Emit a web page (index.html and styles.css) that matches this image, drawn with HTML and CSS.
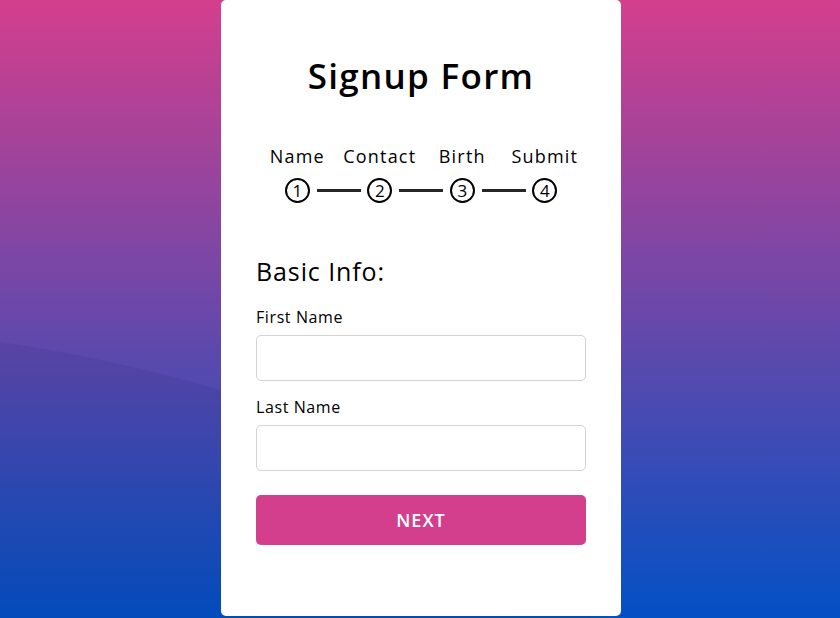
FILE: index.html
```html
<!DOCTYPE html>
<html lang="en">
<head>
<meta charset="utf-8">
<title>Signup Form</title>
<link rel="stylesheet" href="styles.css">
</head>
<body>
<svg class="wave" viewBox="0 0 840 618" preserveAspectRatio="none" aria-hidden="true">
  <path d="M0,342 Q110,358 221,390 Q332,422 621,640 L840,700 L0,700 Z" fill="rgba(20,20,60,0.07)"/>
</svg>
<div class="container">
  <header class="header">Signup Form</header>
  <div class="progress-bar">
    <div class="step"><p>Name</p><div class="bullet"><span>1</span></div></div>
    <div class="step"><p>Contact</p><div class="bullet"><span>2</span></div></div>
    <div class="step"><p>Birth</p><div class="bullet"><span>3</span></div></div>
    <div class="step"><p>Submit</p><div class="bullet last"><span>4</span></div></div>
  </div>
  <div class="form-outer">
    <form class="page">
      <div class="title">Basic Info:</div>
      <div class="field">
        <div class="label">First Name</div>
        <input type="text">
      </div>
      <div class="field">
        <div class="label">Last Name</div>
        <input type="text">
      </div>
      <div class="field">
        <button type="button" class="next">Next</button>
      </div>
    </form>
  </div>
</div>
</body>
</html>
```
FILE: styles.css
```css
* {
  margin: 0;
  padding: 0;
  box-sizing: border-box;
  font-family: "Open Sans", "Noto Sans", sans-serif;
}
body {
  display: flex;
  align-items: flex-start;
  justify-content: center;
  min-height: 100vh;
  background: linear-gradient(to top, #0250c5, #d43f8d);
  position: relative;
  overflow: hidden;
}
.wave {
  position: absolute;
  left: 0;
  top: 0;
  width: 100%;
  height: 100%;
  z-index: 0;
}
.container {
  position: relative;
  z-index: 1;
  width: 400px;
  margin-left: 2px;
  background: #fff;
  text-align: center;
  border-radius: 5px;
  padding: 50px 35px 11px 35px;
}
.header {
  font-size: 35px;
  font-weight: 600;
  line-height: 52.5px;
  letter-spacing: 1.3px;
  margin: 0 0 30px 0;
  color: #000;
}
.progress-bar {
  display: flex;
  height: 70px;
  margin: 40px 0;
}
.step {
  width: 100%;
  text-align: center;
  position: relative;
}
.step p {
  font-size: 18px;
  font-weight: 500;
  line-height: 27px;
  letter-spacing: 1.2px;
  color: #000;
  margin-bottom: 8px;
}
.bullet {
  height: 25px;
  width: 25px;
  border: 2px solid #000;
  display: inline-block;
  border-radius: 50%;
  position: relative;
  font-size: 17px;
  font-weight: 500;
  line-height: 21px;
  vertical-align: top;
  color: #000;
}
.bullet::after {
  position: absolute;
  content: "";
  bottom: 9px;
  right: -53px;
  height: 3px;
  width: 44px;
  background: #262626;
}
.bullet.last::after {
  display: none;
}
.form-outer {
  width: 100%;
}
.title {
  text-align: left;
  font-size: 25px;
  font-weight: 500;
  line-height: 37.5px;
  letter-spacing: 0.9px;
  color: #000;
}
.field {
  width: 330px;
  height: 45px;
  margin: 45px 0;
  display: flex;
  position: relative;
}
.field:first-of-type {
  margin-top: 46px;
}
.label {
  position: absolute;
  top: -30px;
  font-size: 16px;
  font-weight: 500;
  line-height: 24px;
  letter-spacing: 0.6px;
  color: #000;
}
.field input {
  height: 46px;
  width: 100%;
  border: 1px solid lightgrey;
  border-radius: 5px;
  padding-left: 15px;
  font-size: 18px;
  outline: none;
}
.next {
  width: 100%;
  height: 50px;
  border: none;
  background: #d33f8d;
  margin-top: -20px;
  border-radius: 5px;
  color: #fff;
  font-size: 18px;
  font-weight: 600;
  letter-spacing: 1px;
  text-transform: uppercase;
}
```
